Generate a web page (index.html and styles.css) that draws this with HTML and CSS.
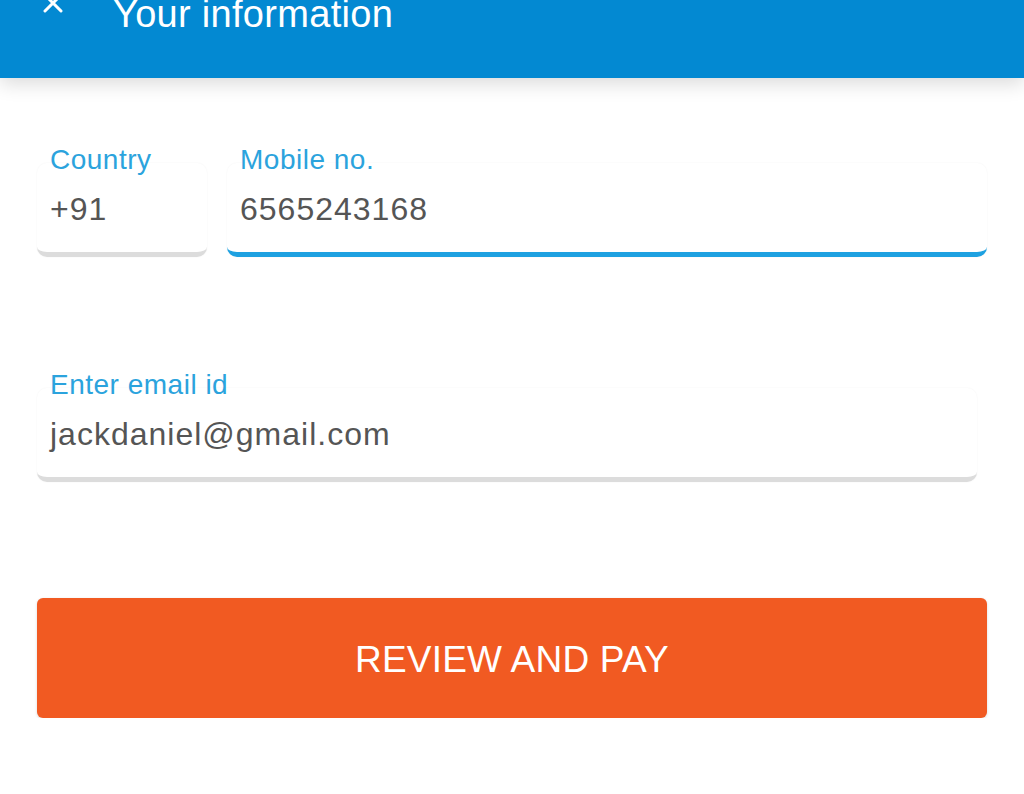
FILE: index.html
```html
<!DOCTYPE html>
<html lang="en">
<head>
<meta charset="utf-8">
<title>Your information</title>
<link rel="stylesheet" href="styles.css">
</head>
<body>
<header class="appbar">
  <div class="appbar-row">
    <svg class="close" width="22" height="22" viewBox="0 0 22 22" aria-hidden="true">
      <path d="M3 3 L19 19 M19 3 L3 19" stroke="#fff" stroke-width="3" stroke-linecap="round" fill="none"/>
    </svg>
    <h1 class="title">Your information</h1>
  </div>
</header>
<main class="content">
  <div class="row">
    <div class="field field-country">
      <div class="label">Country</div>
      <div class="value">+91</div>
    </div>
    <div class="field field-mobile active">
      <div class="label">Mobile no.</div>
      <div class="value">6565243168</div>
    </div>
  </div>
  <div class="row row-email">
    <div class="field field-email">
      <div class="label">Enter email id</div>
      <div class="value">jackdaniel@gmail.com</div>
    </div>
  </div>
  <button class="pay">REVIEW AND PAY</button>
</main>
</body>
</html>
```
FILE: styles.css
```css
html, body {
  margin: 0;
  padding: 0;
  background: #ffffff;
  font-family: "Liberation Sans", Arial, sans-serif;
}

.appbar {
  height: 78px;
  background: #0389d2;
  box-shadow: 0 6px 18px rgba(0, 0, 0, 0.14);
  overflow: hidden;
  position: relative;
  z-index: 1;
}

.appbar-row {
  display: flex;
  align-items: flex-start;
  margin-top: -5px;
  padding-left: 42px;
}

.close {
  display: block;
  flex: none;
  margin-top: -3px;
}

.title {
  margin: 0 0 0 49px;
  font-size: 38px;
  line-height: 38px;
  font-weight: normal;
  letter-spacing: 0.3px;
  color: #ffffff;
}

.content {
  padding: 85px 37px 0 37px;
}

.row {
  display: flex;
  gap: 20px;
}

.row-email {
  margin-top: 131px;
  padding-right: 10px;
}

.field {
  box-sizing: border-box;
  height: 94px;
  background: #ffffff;
  border-radius: 10px;
  border-bottom: 5px solid #dcdcdc;
  box-shadow: 0 0 2px rgba(0, 0, 0, 0.05);
  padding-left: 13px;
}

.field-country {
  width: 170px;
  flex: none;
}

.field-mobile {
  flex: 1;
}

.field-email {
  flex: 1;
}

.field.active {
  border-bottom-color: #1ea1e1;
}

.label {
  margin-top: -17px;
  font-size: 28px;
  line-height: 28px;
  letter-spacing: 0.5px;
  color: #2ba3dd;
}

.value {
  margin-top: 20px;
  font-size: 32px;
  line-height: 30px;
  letter-spacing: 1px;
  color: #555555;
}

.pay {
  display: block;
  box-sizing: border-box;
  width: 100%;
  height: 120px;
  margin-top: 116px;
  padding: 3px 0 0 0;
  border: none;
  border-radius: 6px;
  background: #f15a22;
  box-shadow: 0 1px 3px rgba(0, 0, 0, 0.15);
  color: #ffffff;
  font-family: "Liberation Sans", Arial, sans-serif;
  font-size: 37px;
  letter-spacing: 0.2px;
}
```
